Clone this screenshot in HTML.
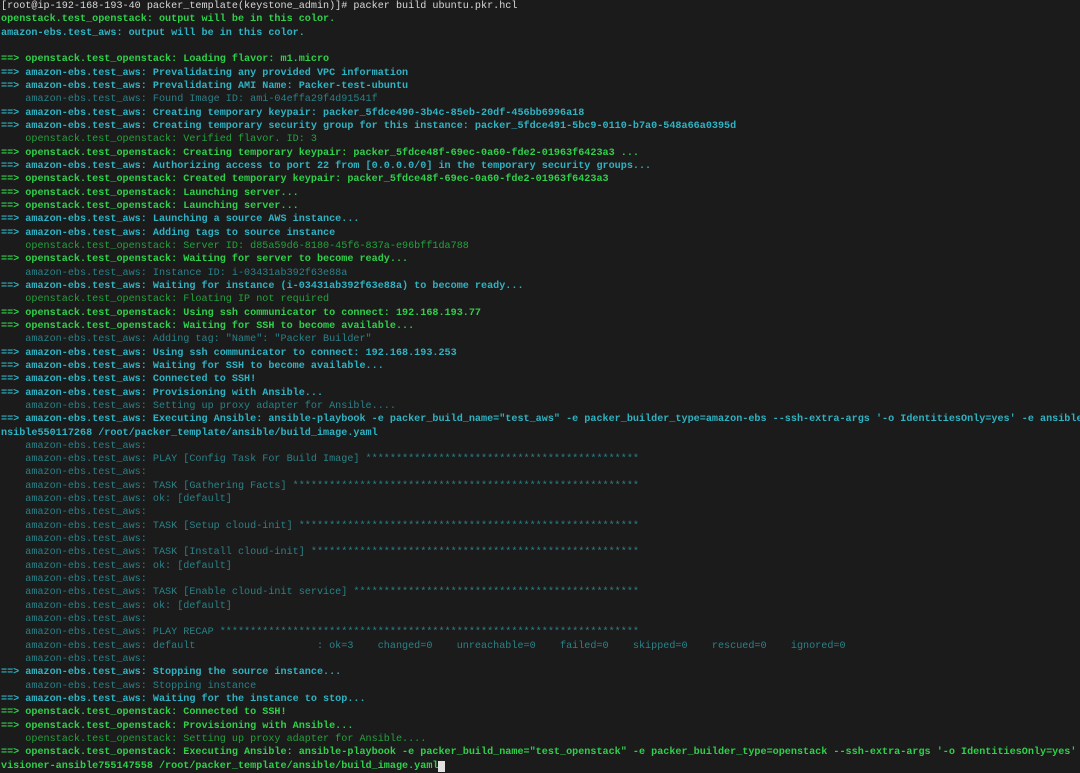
<!DOCTYPE html>
<html><head><meta charset="utf-8"><style>
html,body{margin:0;padding:0;background:#1b1b1b;width:1080px;height:773px;overflow:hidden}
pre{margin:0;padding:0 0 0 1px;position:relative;top:0px;font-family:"Liberation Mono",monospace;font-size:10.13px;line-height:13.33px;color:#d8d8d8;white-space:pre}
.g{color:#2fd04a;font-weight:bold}
.c{color:#2fb3c3;font-weight:bold}
.d{color:#2a8288}
.gd{color:#23a33c}
.cur{background:#e0e0e0;color:#e0e0e0}
</style></head><body><pre>[root@ip-192-168-193-40 packer_template(keystone_admin)]# packer build ubuntu.pkr.hcl
<span class="g">openstack.test_openstack: output will be in this color.</span>
<span class="c">amazon-ebs.test_aws: output will be in this color.</span>

<span class="g">==&gt; openstack.test_openstack: Loading flavor: m1.micro</span>
<span class="c">==&gt; amazon-ebs.test_aws: Prevalidating any provided VPC information</span>
<span class="c">==&gt; amazon-ebs.test_aws: Prevalidating AMI Name: Packer-test-ubuntu</span>
<span class="d">    amazon-ebs.test_aws: Found Image ID: ami-04effa29f4d91541f</span>
<span class="c">==&gt; amazon-ebs.test_aws: Creating temporary keypair: packer_5fdce490-3b4c-85eb-20df-456bb6996a18</span>
<span class="c">==&gt; amazon-ebs.test_aws: Creating temporary security group for this instance: packer_5fdce491-5bc9-0110-b7a0-548a66a0395d</span>
<span class="gd">    openstack.test_openstack: Verified flavor. ID: 3</span>
<span class="g">==&gt; openstack.test_openstack: Creating temporary keypair: packer_5fdce48f-69ec-0a60-fde2-01963f6423a3 ...</span>
<span class="c">==&gt; amazon-ebs.test_aws: Authorizing access to port 22 from [0.0.0.0/0] in the temporary security groups...</span>
<span class="g">==&gt; openstack.test_openstack: Created temporary keypair: packer_5fdce48f-69ec-0a60-fde2-01963f6423a3</span>
<span class="g">==&gt; openstack.test_openstack: Launching server...</span>
<span class="g">==&gt; openstack.test_openstack: Launching server...</span>
<span class="c">==&gt; amazon-ebs.test_aws: Launching a source AWS instance...</span>
<span class="c">==&gt; amazon-ebs.test_aws: Adding tags to source instance</span>
<span class="gd">    openstack.test_openstack: Server ID: d85a59d6-8180-45f6-837a-e96bff1da788</span>
<span class="g">==&gt; openstack.test_openstack: Waiting for server to become ready...</span>
<span class="d">    amazon-ebs.test_aws: Instance ID: i-03431ab392f63e88a</span>
<span class="c">==&gt; amazon-ebs.test_aws: Waiting for instance (i-03431ab392f63e88a) to become ready...</span>
<span class="gd">    openstack.test_openstack: Floating IP not required</span>
<span class="g">==&gt; openstack.test_openstack: Using ssh communicator to connect: 192.168.193.77</span>
<span class="g">==&gt; openstack.test_openstack: Waiting for SSH to become available...</span>
<span class="d">    amazon-ebs.test_aws: Adding tag: "Name": "Packer Builder"</span>
<span class="c">==&gt; amazon-ebs.test_aws: Using ssh communicator to connect: 192.168.193.253</span>
<span class="c">==&gt; amazon-ebs.test_aws: Waiting for SSH to become available...</span>
<span class="c">==&gt; amazon-ebs.test_aws: Connected to SSH!</span>
<span class="c">==&gt; amazon-ebs.test_aws: Provisioning with Ansible...</span>
<span class="d">    amazon-ebs.test_aws: Setting up proxy adapter for Ansible....</span>
<span class="c">==&gt; amazon-ebs.test_aws: Executing Ansible: ansible-playbook -e packer_build_name="test_aws" -e packer_builder_type=amazon-ebs --ssh-extra-args '-o IdentitiesOnly=yes' -e ansible</span>
<span class="c">nsible550117268 /root/packer_template/ansible/build_image.yaml</span>
<span class="d">    amazon-ebs.test_aws:</span>
<span class="d">    amazon-ebs.test_aws: PLAY [Config Task For Build Image] *********************************************</span>
<span class="d">    amazon-ebs.test_aws:</span>
<span class="d">    amazon-ebs.test_aws: TASK [Gathering Facts] *********************************************************</span>
<span class="d">    amazon-ebs.test_aws: ok: [default]</span>
<span class="d">    amazon-ebs.test_aws:</span>
<span class="d">    amazon-ebs.test_aws: TASK [Setup cloud-init] ********************************************************</span>
<span class="d">    amazon-ebs.test_aws:</span>
<span class="d">    amazon-ebs.test_aws: TASK [Install cloud-init] ******************************************************</span>
<span class="d">    amazon-ebs.test_aws: ok: [default]</span>
<span class="d">    amazon-ebs.test_aws:</span>
<span class="d">    amazon-ebs.test_aws: TASK [Enable cloud-init service] ***********************************************</span>
<span class="d">    amazon-ebs.test_aws: ok: [default]</span>
<span class="d">    amazon-ebs.test_aws:</span>
<span class="d">    amazon-ebs.test_aws: PLAY RECAP *********************************************************************</span>
<span class="d">    amazon-ebs.test_aws: default                    : ok=3    changed=0    unreachable=0    failed=0    skipped=0    rescued=0    ignored=0</span>
<span class="d">    amazon-ebs.test_aws:</span>
<span class="c">==&gt; amazon-ebs.test_aws: Stopping the source instance...</span>
<span class="d">    amazon-ebs.test_aws: Stopping instance</span>
<span class="c">==&gt; amazon-ebs.test_aws: Waiting for the instance to stop...</span>
<span class="g">==&gt; openstack.test_openstack: Connected to SSH!</span>
<span class="g">==&gt; openstack.test_openstack: Provisioning with Ansible...</span>
<span class="gd">    openstack.test_openstack: Setting up proxy adapter for Ansible....</span>
<span class="g">==&gt; openstack.test_openstack: Executing Ansible: ansible-playbook -e packer_build_name="test_openstack" -e packer_builder_type=openstack --ssh-extra-args '-o IdentitiesOnly=yes'</span>
<span class="g">visioner-ansible755147558 /root/packer_template/ansible/build_image.yaml</span><span class="cur">_</span></pre></body></html>
